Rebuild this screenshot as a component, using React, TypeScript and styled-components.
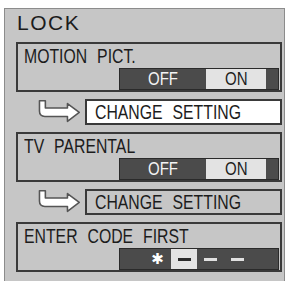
import React from "react";
import styled, { createGlobalStyle } from "styled-components";

const Global = createGlobalStyle`
  html, body { margin: 0; padding: 0; background: #ffffff; }
  body { font-family: "Liberation Sans", Arial, sans-serif; color: #1c1c1c; }
`;

const Panel = styled.div`
  box-sizing: border-box;
  margin: 8px 0 0 4px;
  width: 281px;
  height: 273px;
  background: #c6c6c6;
  border: 1px solid #8c8c8c;
  border-bottom: none;
  padding: 3px 2px 0 11px;
  display: flex;
  flex-direction: column;
  gap: 7px;
`;

const Title = styled.div`
  font-size: 21px;
  line-height: 22px;
  letter-spacing: 1.5px;
  padding-left: 1px;
  margin-bottom: 1px;
`;

const Narrow = styled.span<{ $origin?: string }>`
  display: inline-block;
  transform: scaleX(0.79);
  transform-origin: ${(p) => p.$origin ?? "left"} center;
  white-space: nowrap;
`;

const Section = styled.div`
  box-sizing: border-box;
  height: 50px;
  border: 2px solid #3a3a3a;
  padding: 2px 1px 0 6px;
  display: flex;
  flex-direction: column;
  gap: 2px;
`;

const Label = styled.div`
  font-size: 20px;
  line-height: 20px;
  word-spacing: 7px;
  white-space: nowrap;
`;

const Bar = styled.div`
  box-sizing: border-box;
  align-self: flex-end;
  width: 160px;
  height: 22px;
  background: #4b4b4b;
  border: 1px solid #2a2a2a;
  display: flex;
  align-items: stretch;
`;

const Cell = styled.div<{ $w: number; $light?: boolean }>`
  width: ${(p) => p.$w}px;
  background: ${(p) => (p.$light ? "#e3e3e3" : "transparent")};
  color: ${(p) => (p.$light ? "#1c1c1c" : "#f4f4f4")};
  display: flex;
  align-items: center;
  justify-content: center;
  font-size: 19px;
  line-height: 20px;
`;

const Dash = styled.span<{ $dark?: boolean }>`
  display: block;
  width: 13px;
  height: 3px;
  background: ${(p) => (p.$dark ? "#2a2a2a" : "#e0e0e0")};
`;

const Star = styled.span`
  font-family: "DejaVu Sans", sans-serif;
  font-size: 15px;
  color: #ffffff;
  line-height: 15px;
`;

const Row = styled.div`
  height: 26px;
  display: flex;
  align-items: flex-start;
  padding-left: 22px;
  gap: 4px;
`;

const SettingBox = styled.div<{ $active?: boolean }>`
  box-sizing: border-box;
  flex: 1;
  height: 26px;
  border: 2px solid #3a3a3a;
  background: ${(p) => (p.$active ? "#ffffff" : "#c6c6c6")};
  padding: 0 0 0 8px;
  display: flex;
  align-items: center;
  font-size: 20px;
  word-spacing: 7px;
  white-space: nowrap;
`;

const Arrow = () => (
  <svg width="44" height="26" viewBox="0 0 44 26">
    <path
      d="M1.5 1.5 H7.5 V9 H30 V4.5 L42 13.5 L30 22.5 V17.5 H7 Q1.5 17.5 1.5 12 Z"
      fill="#ffffff"
      stroke="#555555"
      strokeWidth="1.6"
      strokeLinejoin="round"
    />
  </svg>
);

const Toggle = () => (
  <Bar>
    <Cell $w={86}>
      <Narrow $origin="center">OFF</Narrow>
    </Cell>
    <Cell $w={60} $light>
      <Narrow $origin="center">ON</Narrow>
    </Cell>
  </Bar>
);

const CodeBar = styled(Bar)`
  padding-left: 24px;
`;

export default function App() {
  return (
    <>
      <Global />
      <Panel>
        <Title>LOCK</Title>
        <Section>
          <Label>
            <Narrow>MOTION PICT.</Narrow>
          </Label>
          <Toggle />
        </Section>
        <Row>
          <Arrow />
          <SettingBox $active>
            <Narrow>CHANGE SETTING</Narrow>
          </SettingBox>
        </Row>
        <Section>
          <Label>
            <Narrow>TV PARENTAL</Narrow>
          </Label>
          <Toggle />
        </Section>
        <Row>
          <Arrow />
          <SettingBox>
            <Narrow>CHANGE SETTING</Narrow>
          </SettingBox>
        </Row>
        <Section>
          <Label>
            <Narrow>ENTER CODE FIRST</Narrow>
          </Label>
          <CodeBar>
            <Cell $w={27}>
              <Star>✱</Star>
            </Cell>
            <Cell $w={26} $light>
              <Dash $dark />
            </Cell>
            <Cell $w={27}>
              <Dash />
            </Cell>
            <Cell $w={27}>
              <Dash />
            </Cell>
          </CodeBar>
        </Section>
      </Panel>
    </>
  );
}
